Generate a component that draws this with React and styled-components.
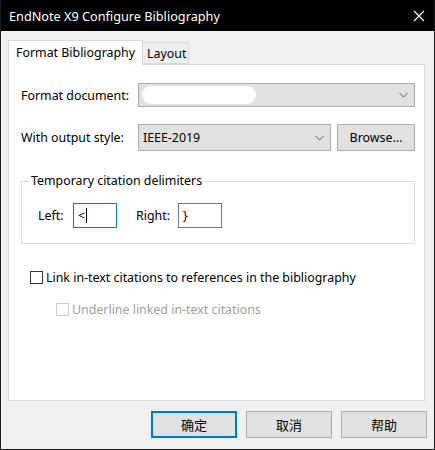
import React from "react";
import styled, { createGlobalStyle } from "styled-components";

const Global = createGlobalStyle`
  html, body { margin: 0; padding: 0; background: #f0f0f0; }
  * { box-sizing: border-box; }
  body { font-family: "Noto Sans", "Noto Sans CJK SC", sans-serif; font-size: 12.4px; color: #000; }
`;

const Window = styled.div`
  width: 435px;
  height: 450px;
  border: 1px solid #1c1c1c;
  border-top: none;
  background: #f0f0f0;
  display: flex;
  flex-direction: column;
`;

const TitleBar = styled.div`
  height: 31px;
  background: #000;
  color: #fff;
  display: flex;
  align-items: center;
  justify-content: space-between;
  padding: 0 9px 0 8px;
  font-size: 12.7px;
  flex-shrink: 0;
`;

const CloseIcon = () => (
  <svg width="12" height="12" viewBox="0 0 12 12">
    <path d="M1 1 L11 11 M11 1 L1 11" stroke="#fff" strokeWidth="1.1" />
  </svg>
);

const Body = styled.div`
  flex: 1;
  display: flex;
  flex-direction: column;
  padding: 9px 7px 11px 7px;
`;

const Tabs = styled.div`
  display: flex;
  align-items: flex-end;
  height: 24px;
  position: relative;
  z-index: 1;
`;

const Tab = styled.div`
  height: ${(p) => (p.$active ? 25 : 22)}px;
  margin-bottom: ${(p) => (p.$active ? -1 : 0)}px;
  width: ${(p) => p.$w}px;
  background: ${(p) => (p.$active ? "#fff" : "#f0f0f0")};
  border: 1px solid #d9d9d9;
  border-bottom: ${(p) => (p.$active ? "none" : "1px solid #d9d9d9")};
  border-left: ${(p) => (p.$active ? "1px solid #d9d9d9" : "none")};
  display: flex;
  align-items: ${(p) => (p.$active ? "flex-start" : "center")};
  padding: ${(p) => (p.$active ? "3px 0 0 7px" : "0 0 0 4px")};
  white-space: nowrap;
`;

const Panel = styled.div`
  flex: 1;
  background: #fff;
  border: 1px solid #d9d9d9;
  margin-right: 2px;
  padding: 18px 9px 0 12px;
  display: flex;
  flex-direction: column;
`;

const FieldRow = styled.div`
  display: flex;
  align-items: center;
  margin-top: ${(p) => p.$mt || 0}px;
`;

const FieldLabel = styled.div`
  width: 117px;
  flex-shrink: 0;
  white-space: nowrap;
`;

const Combo = styled.div`
  width: ${(p) => p.$w}px;
  height: ${(p) => p.$h}px;
  background: #e1e1e1;
  border: 1px solid #adadad;
  display: flex;
  align-items: center;
  justify-content: space-between;
  padding: 0 6px 0 3px;
`;

const Redacted = styled.div`
  width: 114px;
  height: 18px;
  border-radius: 9px;
  background: #fff;
`;

const ComboText = styled.span`
  padding-left: 1px;
`;

const Chevron = () => (
  <svg width="9" height="6" viewBox="0 0 9 6">
    <path d="M0.5 1 L4.5 5 L8.5 1" fill="none" stroke="#555" strokeWidth="1" />
  </svg>
);

const Button = styled.div`
  width: ${(p) => p.$w || 86}px;
  height: 27px;
  margin-left: ${(p) => p.$ml || 0}px;
  background: #e1e1e1;
  border: ${(p) => (p.$default ? "2px solid #0078d7" : "1px solid #adadad")};
  display: flex;
  align-items: center;
  justify-content: center;
  font-size: ${(p) => (p.$cjk ? 13 : 12.4)}px;
`;

const Group = styled.fieldset`
  margin: 21px 0 0 0;
  border: 1px solid #dcdcdc;
  padding: 13px 0 15px 16px;
  display: flex;
  align-items: center;
`;

const Legend = styled.legend`
  margin-left: -9px;
  padding: 0 2px 0 2px;
  line-height: 18px;
`;

const DelimLabel = styled.span`
  width: ${(p) => p.$w}px;
  margin-left: ${(p) => p.$ml || 0}px;
  white-space: nowrap;
`;

const DelimInput = styled.div`
  width: 44px;
  height: 25px;
  border: 1px solid ${(p) => (p.$focus ? "#0078d7" : "#7a7a7a")};
  display: flex;
  align-items: center;
  padding-left: 4px;
  background: #fff;
`;

const Caret = styled.span`
  display: inline-block;
  width: 1px;
  height: 15px;
  background: #000;
  margin-left: 1px;
`;

const CheckRow = styled.div`
  display: flex;
  align-items: center;
  height: 18px;
  margin-top: ${(p) => p.$mt}px;
  margin-left: ${(p) => p.$ml}px;
  color: ${(p) => (p.$disabled ? "#a0a0a0" : "#000")};
`;

const Box = styled.span`
  width: 13px;
  height: 13px;
  border: 1px solid ${(p) => (p.$disabled ? "#cccccc" : "#333333")};
  background: #fff;
  margin-right: 3px;
  flex-shrink: 0;
`;

const ButtonRow = styled.div`
  display: flex;
  justify-content: flex-end;
  margin-top: 10px;
`;

export default function App() {
  return (
    <>
      <Global />
      <Window>
        <TitleBar>
          <span>EndNote X9 Configure Bibliography</span>
          <CloseIcon />
        </TitleBar>
        <Body>
          <Tabs>
            <Tab $active $w={135}>Format Bibliography</Tab>
            <Tab $w={46}>Layout</Tab>
          </Tabs>
          <Panel>
            <FieldRow>
              <FieldLabel>Format document:</FieldLabel>
              <Combo $w={277} $h={24}>
                <Redacted />
                <Chevron />
              </Combo>
            </FieldRow>
            <FieldRow $mt={17}>
              <FieldLabel>With output style:</FieldLabel>
              <Combo $w={193} $h={27}>
                <ComboText>IEEE-2019</ComboText>
                <Chevron />
              </Combo>
              <Button $w={78} $ml={6}>Browse...</Button>
            </FieldRow>
            <Group>
              <Legend>Temporary citation delimiters</Legend>
              <DelimLabel $w={35}>Left:</DelimLabel>
              <DelimInput $focus>
                &lt;<Caret />
              </DelimInput>
              <DelimLabel $w={42} $ml={19}>Right:</DelimLabel>
              <DelimInput>{"}"}</DelimInput>
            </Group>
            <CheckRow $mt={24} $ml={9}>
              <Box />
              Link in-text citations to references in the bibliography
            </CheckRow>
            <CheckRow $mt={14} $ml={35} $disabled>
              <Box $disabled />
              Underline linked in-text citations
            </CheckRow>
          </Panel>
          <ButtonRow>
            <Button $default $cjk>确定</Button>
            <Button $ml={9} $cjk>取消</Button>
            <Button $ml={9} $cjk>帮助</Button>
          </ButtonRow>
        </Body>
      </Window>
    </>
  );
}
